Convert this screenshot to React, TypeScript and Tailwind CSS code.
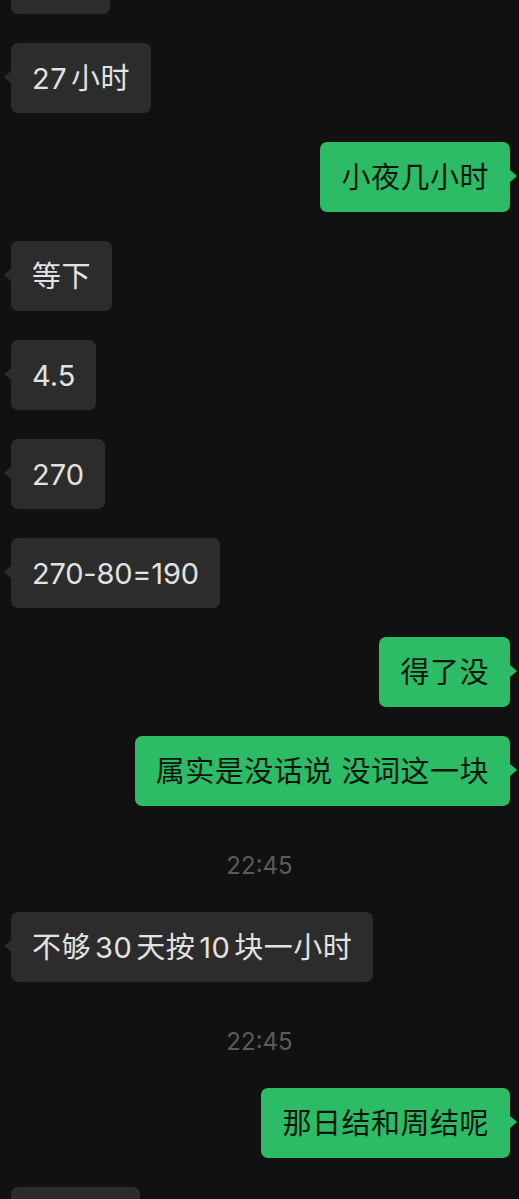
import type { ReactNode } from 'react';

type Msg =
  | { kind: 'in'; text: ReactNode; w?: string }
  | { kind: 'out'; text: ReactNode }
  | { kind: 'time'; text: string };

// iOS puts a little air between CJK and latin digits
const Num = ({ children }: { children: ReactNode }) => (
  <span className="mx-[4px]">{children}</span>
);

const messages: Msg[] = [
  { kind: 'in', text: '\u00a0', w: 'min-w-[99px]' },
  {
    kind: 'in',
    text: (
      <>
        <span className="mr-[4px]">27</span>小时
      </>
    ),
  },
  { kind: 'out', text: '小夜几小时' },
  { kind: 'in', text: '等下' },
  { kind: 'in', text: <span className="tracking-normal">4.5</span> },
  { kind: 'in', text: <span className="tracking-normal">270</span> },
  { kind: 'in', text: <span className="tracking-[-0.2px]">270-80=190</span> },
  { kind: 'out', text: '得了没' },
  { kind: 'out', text: '属实是没话说 没词这一块' },
  { kind: 'time', text: '22:45' },
  {
    kind: 'in',
    text: (
      <>
        不够<Num>30</Num>天按<Num>10</Num>块一小时
      </>
    ),
  },
  { kind: 'time', text: '22:45' },
  { kind: 'out', text: '那日结和周结呢' },
  { kind: 'in', text: '\u00a0', w: 'min-w-[129px]' },
];

function Bubble({
  side,
  text,
  first,
  w,
  afterTime,
}: {
  side: 'in' | 'out';
  text: ReactNode;
  first?: boolean;
  w?: string;
  afterTime?: boolean;
}) {
  const isOut = side === 'out';
  return (
    <div
      className={`flex ${isOut ? 'justify-end pr-[9px]' : 'justify-start pl-[11px]'} ${
        first ? '-mt-[56px]' : afterTime ? 'mt-[31px]' : 'mt-[29px]'
      }`}
    >
      <div
        className={`relative rounded-[7px] px-[21px] h-[70px] flex items-center text-[29px] leading-none whitespace-nowrap ${
          isOut ? 'bg-[#2dbc66] text-[#0c160f]' : 'bg-[#2c2c2c] text-[#e2e2e2]'
        } ${w ?? ''}`}
      >
        {/* tail */}
        {isOut ? (
          <span className="absolute right-[-7px] top-[28px] w-0 h-0 border-y-[6px] border-y-transparent border-l-[7px] border-l-[#2dbc66]" />
        ) : (
          <span className="absolute left-[-7px] top-[28px] w-0 h-0 border-y-[6px] border-y-transparent border-r-[7px] border-r-[#2c2c2c]" />
        )}
        <span className="tracking-[0.5px]">{text}</span>
      </div>
    </div>
  );
}

export default function App() {
  return (
    <div
      className="w-[519px] h-[1199px] overflow-hidden bg-[#111111]"
      style={{ fontFamily: 'Inter, "Noto Sans CJK SC", sans-serif' }}
    >
      <div className="flex flex-col">
        {messages.map((m, i) =>
          m.kind === 'time' ? (
            <div
              key={i}
              className="mt-[45px] h-[30px] flex items-center justify-center text-[24px] text-[#5b5b5b] leading-none"
            >
              {m.text}
            </div>
          ) : (
            <Bubble
              key={i}
              side={m.kind}
              text={m.text}
              first={i === 0}
              w={m.kind === 'in' ? m.w : undefined}
              afterTime={messages[i - 1]?.kind === 'time'}
            />
          )
        )}
      </div>
    </div>
  );
}
